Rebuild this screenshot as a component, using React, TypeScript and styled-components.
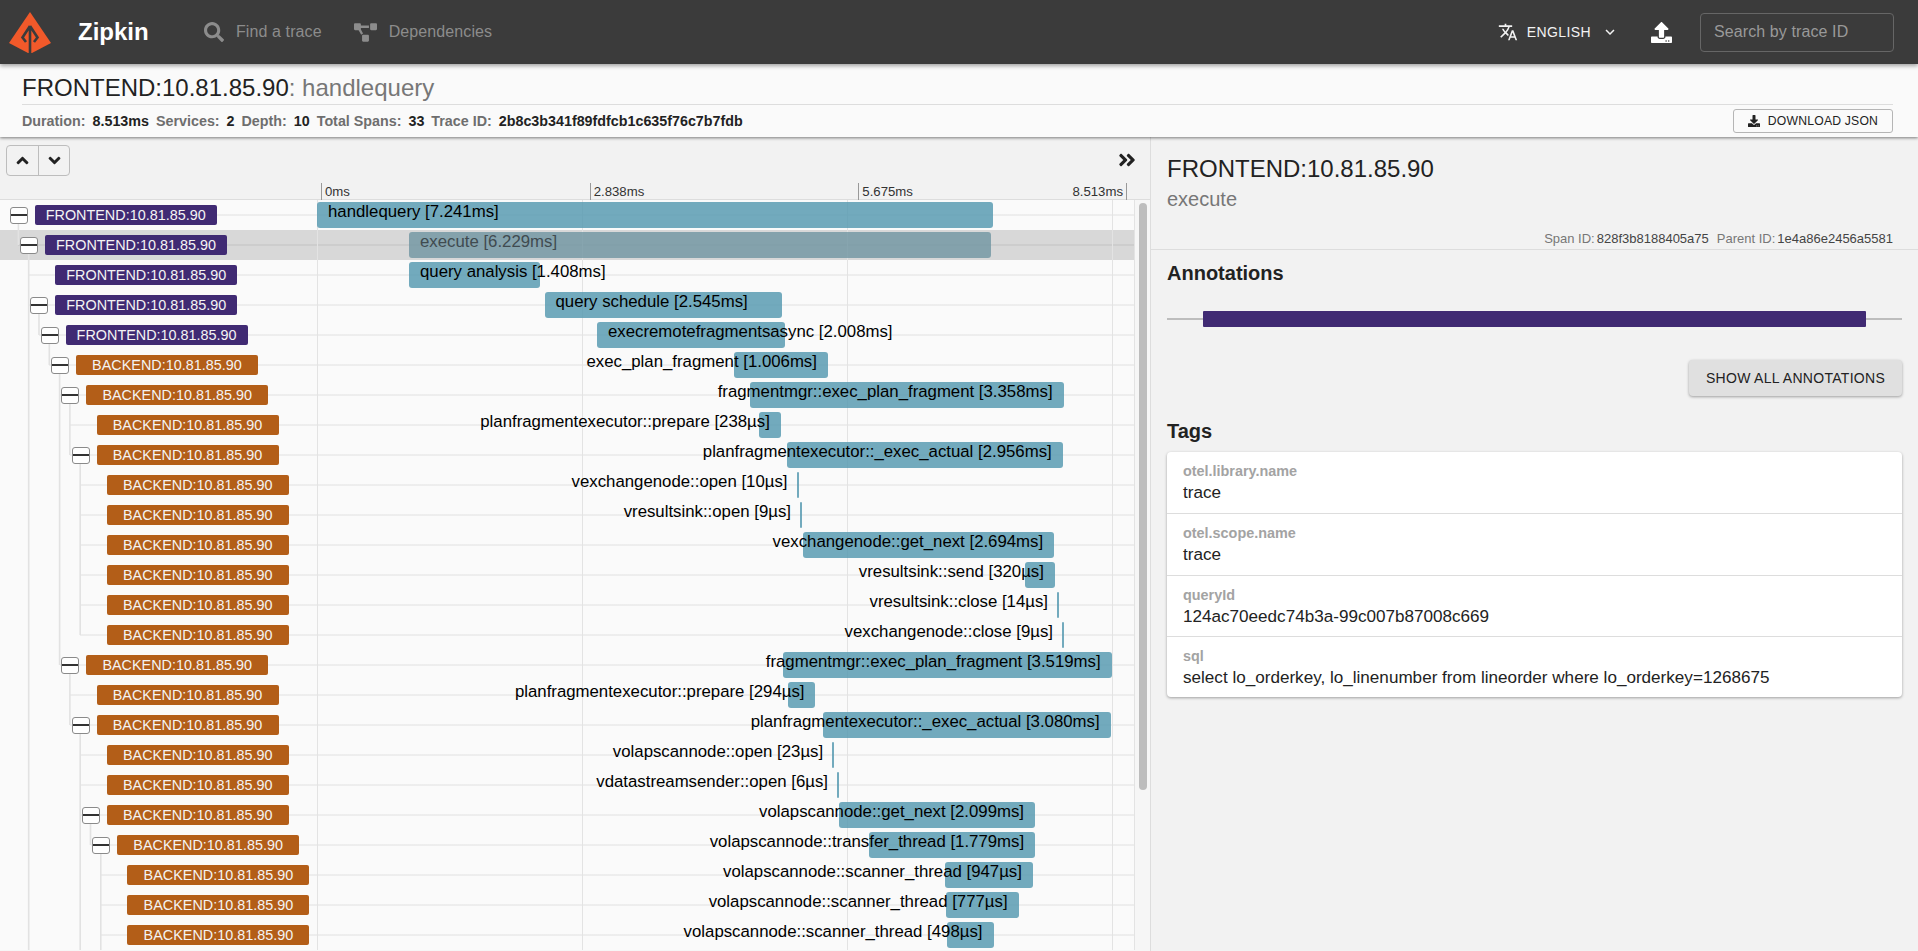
import styled, { createGlobalStyle } from 'styled-components';
import { FaAngleDoubleRight, FaAngleDown, FaAngleUp, FaDownload, FaProjectDiagram, FaSearch, FaUpload } from 'react-icons/fa';
import { MdExpandMore, MdTranslate } from 'react-icons/md';

const FRONTEND = 'FRONTEND:10.81.85.90';
const BACKEND = 'BACKEND:10.81.85.90';

const MS_WIDTH = 795 / 8.513;
const ROW_HEIGHT = 30;
const INDENT = 10.3;

interface Span {
  service: string;
  depth: number;
  toggle?: boolean;
  name: string;
  time: string;
  start: number;
  ms: number;
  right?: boolean;
}

const spans: Span[] = [
  { service: FRONTEND, depth: 0, toggle: true, name: 'handlequery', time: '7.241ms', start: 0, ms: 7.241 },
  { service: FRONTEND, depth: 1, toggle: true, name: 'execute', time: '6.229ms', start: 92, ms: 6.229 },
  { service: FRONTEND, depth: 2, name: 'query analysis', time: '1.408ms', start: 92, ms: 1.408 },
  { service: FRONTEND, depth: 2, toggle: true, name: 'query schedule', time: '2.545ms', start: 227.5, ms: 2.545 },
  { service: FRONTEND, depth: 3, toggle: true, name: 'execremotefragmentsasync', time: '2.008ms', start: 280, ms: 2.008 },
  { service: BACKEND, depth: 4, toggle: true, name: 'exec_plan_fragment', time: '1.006ms', start: 417, ms: 1.006, right: true },
  { service: BACKEND, depth: 5, toggle: true, name: 'fragmentmgr::exec_plan_fragment', time: '3.358ms', start: 433, ms: 3.358, right: true },
  { service: BACKEND, depth: 6, name: 'planfragmentexecutor::prepare', time: '238µs', start: 441.6, ms: 0.238, right: true },
  { service: BACKEND, depth: 6, toggle: true, name: 'planfragmentexecutor::_exec_actual', time: '2.956ms', start: 469.7, ms: 2.956, right: true },
  { service: BACKEND, depth: 7, name: 'vexchangenode::open', time: '10µs', start: 479.5, ms: 0.01, right: true },
  { service: BACKEND, depth: 7, name: 'vresultsink::open', time: '9µs', start: 483, ms: 0.009, right: true },
  { service: BACKEND, depth: 7, name: 'vexchangenode::get_next', time: '2.694ms', start: 485.6, ms: 2.694, right: true },
  { service: BACKEND, depth: 7, name: 'vresultsink::send', time: '320µs', start: 708, ms: 0.32, right: true },
  { service: BACKEND, depth: 7, name: 'vresultsink::close', time: '14µs', start: 740, ms: 0.014, right: true },
  { service: BACKEND, depth: 7, name: 'vexchangenode::close', time: '9µs', start: 745, ms: 0.009, right: true },
  { service: BACKEND, depth: 5, toggle: true, name: 'fragmentmgr::exec_plan_fragment', time: '3.519ms', start: 466, ms: 3.519, right: true },
  { service: BACKEND, depth: 6, name: 'planfragmentexecutor::prepare', time: '294µs', start: 471, ms: 0.294, right: true },
  { service: BACKEND, depth: 6, toggle: true, name: 'planfragmentexecutor::_exec_actual', time: '3.080ms', start: 506, ms: 3.08, right: true },
  { service: BACKEND, depth: 7, name: 'volapscannode::open', time: '23µs', start: 515, ms: 0.023, right: true },
  { service: BACKEND, depth: 7, name: 'vdatastreamsender::open', time: '6µs', start: 520, ms: 0.006, right: true },
  { service: BACKEND, depth: 7, toggle: true, name: 'volapscannode::get_next', time: '2.099ms', start: 522, ms: 2.099, right: true },
  { service: BACKEND, depth: 8, toggle: true, name: 'volapscannode::transfer_thread', time: '1.779ms', start: 552, ms: 1.779, right: true },
  { service: BACKEND, depth: 9, name: 'volapscannode::scanner_thread', time: '947µs', start: 627.5, ms: 0.947, right: true },
  { service: BACKEND, depth: 9, name: 'volapscannode::scanner_thread', time: '777µs', start: 629, ms: 0.777, right: true },
  { service: BACKEND, depth: 9, name: 'volapscannode::scanner_thread', time: '498µs', start: 630, ms: 0.498, right: true },
];

// [depth of the parent, first row, last row] of each tree connector
const connectors: [number, number, number][] = [
  [0, 0, 1],
  [1, 1, 25],
  [2, 3, 4],
  [3, 4, 5],
  [4, 5, 15],
  [5, 6, 8],
  [6, 8, 14],
  [5, 15, 17],
  [6, 17, 25],
  [7, 20, 21],
  [8, 21, 25],
];

const tags = [
  { key: 'otel.library.name', value: 'trace' },
  { key: 'otel.scope.name', value: 'trace' },
  { key: 'queryId', value: '124ac70eedc74b3a-99c007b87008c669' },
  { key: 'sql', value: 'select lo_orderkey, lo_linenumber from lineorder where lo_orderkey=1268675' },
];

const GlobalStyle = createGlobalStyle`
  html, body {
    margin: 0;
    padding: 0;
    height: 100%;
    overflow: hidden;
    background: #f2f2f2;
    font-family: "Liberation Sans", Arial, sans-serif;
  }
  * {
    box-sizing: border-box;
  }
`;

const Page = styled.div`
  display: flex;
  flex-direction: column;
  height: 951px;
  overflow: hidden;
`;

const TopBar = styled.header`
  display: flex;
  align-items: center;
  flex: 0 0 64px;
  padding: 0 24px 0 9px;
  background: #3b3b3b;
  position: relative;
  z-index: 2;
  box-shadow: 0 2px 4px rgba(0, 0, 0, 0.35);
`;

const Logo = styled.svg`
  width: 42px;
  height: 42px;
  margin-top: 1px;
`;

const Brand = styled.div`
  margin-left: 27px;
  width: 126px;
  color: #fff;
  font-size: 24px;
  font-weight: 700;
`;

const NavItem = styled.a`
  display: flex;
  align-items: center;
  gap: 12px;
  margin-right: 32px;
  color: #8c8c8c;
  font-size: 16px;
  letter-spacing: 0.1px;
  svg {
    font-size: 20px;
  }
`;

const Spacer = styled.div`
  flex: 1;
`;

const Language = styled.div`
  display: flex;
  align-items: center;
  color: #f2f2f2;
  font-size: 14px;
  letter-spacing: 0.4px;
  margin-right: 32px;
  span {
    margin: 0 10px 0 9px;
  }
`;

const UploadButton = styled.div`
  display: flex;
  color: #fff;
  font-size: 21px;
  margin-right: 28px;
`;

const SearchBox = styled.div`
  width: 194px;
  height: 39px;
  padding: 0 13px;
  display: flex;
  align-items: center;
  border: 1px solid #666;
  border-radius: 4px;
  color: #999;
  font-size: 16px;
  letter-spacing: 0.1px;
`;

const SubHeader = styled.section`
  flex: 0 0 73px;
  padding: 0 25px 0 22px;
  background: #fafafa;
  position: relative;
  z-index: 1;
  box-shadow: 0 1px 3px rgba(0, 0, 0, 0.5);
`;

const TraceTitle = styled.div`
  height: 41px;
  padding-top: 8px;
  border-bottom: 1px solid #ddd;
  font-size: 24px;
  line-height: 32px;
  color: #222;
  span {
    color: #777;
  }
`;

const MetaRow = styled.div`
  height: 32px;
  display: flex;
  align-items: center;
  justify-content: space-between;
`;

const Meta = styled.div`
  display: flex;
  gap: 7px;
  font-size: 14.3px;
  font-weight: 700;
`;

const MetaLabel = styled.span`
  color: #6e6e6e;
`;

const MetaValue = styled.span`
  color: #222;
`;

const DownloadButton = styled.button`
  width: 160px;
  height: 24px;
  display: flex;
  align-items: center;
  justify-content: center;
  gap: 8px;
  padding: 0;
  border: 1px solid #b5b5b5;
  border-radius: 3px;
  background: transparent;
  color: #222;
  font: 12.2px "Liberation Sans", Arial, sans-serif;
  letter-spacing: 0.2px;
  svg {
    font-size: 12px;
  }
`;

const Body = styled.div`
  flex: 1;
  min-height: 0;
  display: flex;
`;

const TracePane = styled.div`
  flex: 0 0 1151px;
  display: flex;
  flex-direction: column;
  min-height: 0;
  border-right: 1px solid #ddd;
`;

const PaneTools = styled.div`
  flex: 0 0 63px;
  position: relative;
  display: flex;
  align-items: flex-start;
  justify-content: space-between;
  padding: 8px 17px 0 6px;
  border-bottom: 1px solid #ddd;
`;

const ExpandGroup = styled.div`
  display: flex;
  height: 31px;
  border: 1px solid #bdbdbd;
  border-radius: 4px;
`;

const ExpandButton = styled.div`
  width: 31px;
  display: flex;
  align-items: center;
  justify-content: center;
  color: #222;
  font-size: 19px;
  & + & {
    border-left: 1px solid #bdbdbd;
  }
`;

const CollapseIcon = styled.div`
  display: flex;
  color: #222;
  font-size: 20px;
  margin-top: 5px;
  margin-right: -4px;
`;

const Ticks = styled.div`
  position: absolute;
  left: 321px;
  right: 23px;
  bottom: 0;
  height: 16px;
  display: grid;
  grid-template-columns: repeat(3, 1fr);
`;

const Tick = styled.div<{ $last?: boolean }>`
  display: flex;
  justify-content: space-between;
  border-left: 1px solid #999;
  padding-left: 3px;
  font-size: 13.2px;
  line-height: 18px;
  color: #333;
  ${(p) => p.$last && 'border-right: 1px solid #999; padding-right: 3px;'}
`;

const RowList = styled.div`
  flex: 1;
  min-height: 0;
  position: relative;
  overflow: hidden;
  background: #f6f6f6;
`;

const Row = styled.div<{ $lineFrom: number; $selected?: boolean }>`
  display: flex;
  width: 1135px;
  height: ${ROW_HEIGHT}px;
  background-color: ${(p) => (p.$selected ? '#d8d8d8' : '#fafafa')};
  background-image: linear-gradient(rgba(0, 0, 0, 0.05), rgba(0, 0, 0, 0.05));
  background-repeat: no-repeat;
  background-size: calc(100% - ${(p) => p.$lineFrom}px) 2px;
  background-position: right center;
`;

const TreeCell = styled.div<{ $depth: number }>`
  flex: 0 0 317px;
  display: flex;
  align-items: center;
  padding-left: ${(p) => 34.7 + p.$depth * INDENT}px;
  position: relative;
`;

const Toggle = styled.div`
  position: absolute;
  width: 18px;
  height: 17px;
  margin-left: -25px;
  border: 1px solid #8a8a8a;
  border-radius: 3px;
  background: linear-gradient(#333, #333) center / 100% 2px no-repeat, #fff;
  z-index: 1;
`;

const ServiceLabel = styled.div<{ $backend: boolean }>`
  width: 182px;
  height: 20px;
  border-radius: 2px;
  background: ${(p) => (p.$backend ? '#b35e18' : '#402a73')};
  color: #f4f4f4;
  font-size: 14.4px;
  line-height: 20px;
  text-align: center;
  white-space: nowrap;
  position: relative;
  z-index: 1;
`;

const BarCell = styled.div`
  flex: 1;
  position: relative;
  background-image: linear-gradient(#e3e3e3, #e3e3e3), linear-gradient(#e3e3e3, #e3e3e3),
    linear-gradient(#e3e3e3, #e3e3e3), linear-gradient(#e3e3e3, #e3e3e3), linear-gradient(#e3e3e3, #e3e3e3);
  background-repeat: no-repeat;
  background-size: 1px 100%;
  background-position: 0 0, 265px 0, 530px 0, 795px 0, 817px 0;
`;

const Bar = styled.div<{ $selected?: boolean }>`
  position: absolute;
  top: 2px;
  height: 26px;
  min-width: 2px;
  border-radius: 3px;
  background: ${(p) => (p.$selected ? 'rgba(111, 149, 161, 0.8)' : 'rgba(89, 155, 177, 0.85)')};
`;

const BarText = styled.div<{ $right?: boolean; $selected?: boolean }>`
  position: absolute;
  top: 0;
  ${(p) => (p.$right ? 'right: 11px;' : 'left: 11px;')}
  font-size: 16.8px;
  line-height: 20px;
  white-space: nowrap;
  color: ${(p) => (p.$selected ? '#404b50' : '#000')};
`;

const TreeLines = styled.svg`
  position: absolute;
  left: 0;
  top: 0;
  z-index: 0;
  pointer-events: none;
`;

const ScrollThumb = styled.div`
  position: absolute;
  left: 1139px;
  top: 3px;
  width: 8px;
  height: 587px;
  border-radius: 4px;
  background: #bdbdbd;
`;

const DetailPane = styled.aside`
  flex: 1;
  min-width: 0;
  display: flex;
  flex-direction: column;
`;

const DetailHead = styled.div`
  flex: 0 0 113px;
  padding: 17px 25px 0 16px;
  border-bottom: 1px solid #ddd;
`;

const DetailService = styled.div`
  font-size: 24px;
  line-height: 30px;
  color: #222;
`;

const DetailSpan = styled.div`
  margin-top: 2px;
  font-size: 20px;
  line-height: 26px;
  color: #777;
`;

const DetailIds = styled.div`
  display: flex;
  justify-content: flex-end;
  gap: 8px;
  margin-top: 19px;
  font-size: 13px;
  line-height: 16px;
  color: #444;
  b {
    font-weight: 400;
    color: #777;
    margin-right: 2px;
  }
`;

const DetailBody = styled.div`
  padding: 10px 16px 0;
`;

const SectionTitle = styled.h2`
  margin: 0;
  font-size: 20px;
  line-height: 26px;
  font-weight: 700;
  color: #222;
`;

const AnnotationTrack = styled.div`
  margin-top: 25px;
  height: 16px;
  padding: 0 36px;
  background: linear-gradient(#bdbdbd, #bdbdbd) center / 100% 2px no-repeat;
`;

const AnnotationBar = styled.div`
  height: 16px;
  border-radius: 1px;
  background: #402a73;
`;

const ButtonRow = styled.div`
  display: flex;
  justify-content: flex-end;
  margin-top: 33px;
`;

const ShowButton = styled.button`
  width: 213px;
  height: 36px;
  border: 0;
  border-radius: 4px;
  background: #e0e0e0;
  color: #222;
  font: 14px "Liberation Sans", Arial, sans-serif;
  letter-spacing: 0.3px;
  box-shadow: 0 1px 3px rgba(0, 0, 0, 0.35);
`;

const TagsTitle = styled(SectionTitle)`
  margin-top: 22px;
`;

const TagCard = styled.div`
  margin-top: 8px;
  border-radius: 4px;
  background: #fff;
  box-shadow: 0 1px 3px rgba(0, 0, 0, 0.35);
`;

const TagRow = styled.div`
  height: 61.3px;
  padding: 11px 16px 0;
  & + & {
    border-top: 1px solid #ddd;
  }
`;

const TagKey = styled.div`
  font-size: 14.4px;
  line-height: 16px;
  font-weight: 700;
  color: #a3a3a3;
`;

const TagValue = styled.div`
  margin-top: 2px;
  font-size: 17.1px;
  line-height: 24px;
  color: #222;
`;

const ZipkinMark = () => (
  <Logo viewBox="0 0 42 42">
    <path d="M21 0 L42 31 L23 41 L21 41 L19 41 L0 31 Z" fill="#f1592a" />
    <path
      d="M21 14 V41 M21 14 L13.5 25.5 L17 30 M21 14 L28.5 25.5 L25 30"
      fill="none"
      stroke="#3b3b3b"
      strokeWidth="2.6"
    />
  </Logo>
);

const App = () => {
  const listHeight = spans.length * ROW_HEIGHT;
  return (
    <Page>
      <GlobalStyle />
      <TopBar>
        <ZipkinMark />
        <Brand>Zipkin</Brand>
        <NavItem>
          <FaSearch />
          Find a trace
        </NavItem>
        <NavItem>
          <FaProjectDiagram style={{ fontSize: 23 }} />
          Dependencies
        </NavItem>
        <Spacer />
        <Language>
          <MdTranslate size={20} />
          <span>ENGLISH</span>
          <MdExpandMore size={18} />
        </Language>
        <UploadButton>
          <FaUpload />
        </UploadButton>
        <SearchBox>Search by trace ID</SearchBox>
      </TopBar>
      <SubHeader>
        <TraceTitle>
          FRONTEND:10.81.85.90<span>: handlequery</span>
        </TraceTitle>
        <MetaRow>
          <Meta>
            <MetaLabel>Duration:</MetaLabel>
            <MetaValue>8.513ms</MetaValue>
            <MetaLabel>Services:</MetaLabel>
            <MetaValue>2</MetaValue>
            <MetaLabel>Depth:</MetaLabel>
            <MetaValue>10</MetaValue>
            <MetaLabel>Total Spans:</MetaLabel>
            <MetaValue>33</MetaValue>
            <MetaLabel>Trace ID:</MetaLabel>
            <MetaValue>2b8c3b341f89fdfcb1c635f76c7b7fdb</MetaValue>
          </Meta>
          <DownloadButton>
            <FaDownload />
            DOWNLOAD JSON
          </DownloadButton>
        </MetaRow>
      </SubHeader>
      <Body>
        <TracePane>
          <PaneTools>
            <ExpandGroup>
              <ExpandButton>
                <FaAngleUp />
              </ExpandButton>
              <ExpandButton>
                <FaAngleDown />
              </ExpandButton>
            </ExpandGroup>
            <CollapseIcon>
              <FaAngleDoubleRight />
            </CollapseIcon>
            <Ticks>
              <Tick>0ms</Tick>
              <Tick>2.838ms</Tick>
              <Tick $last>
                <span>5.675ms</span>
                <span>8.513ms</span>
              </Tick>
            </Ticks>
          </PaneTools>
          <RowList>
            {spans.map((span, i) => {
              const selected = i === 1;
              const lineFrom = span.depth === 0 ? 35 : 18.4 + (span.depth - 1) * INDENT;
              return (
                <Row key={i} $lineFrom={lineFrom} $selected={selected}>
                  <TreeCell $depth={span.depth}>
                    {span.toggle && <Toggle />}
                    <ServiceLabel $backend={span.service === BACKEND}>{span.service}</ServiceLabel>
                  </TreeCell>
                  <BarCell>
                    <Bar $selected={selected} style={{ left: span.start, width: span.ms * MS_WIDTH }}>
                      <BarText $right={span.right} $selected={selected}>
                        {span.name} [{span.time}]
                      </BarText>
                    </Bar>
                  </BarCell>
                </Row>
              );
            })}
            <TreeLines width="316" height={listHeight}>
              {connectors.map(([depth, from, to], i) => {
                const x = 18.4 + depth * INDENT;
                const y2 = to >= spans.length ? listHeight : to * ROW_HEIGHT + 15;
                return <line key={i} x1={x} x2={x} y1={from * ROW_HEIGHT + 15} y2={y2} stroke="#e2e2e2" strokeWidth="1.6" />;
              })}
            </TreeLines>
            <ScrollThumb />
          </RowList>
        </TracePane>
        <DetailPane>
          <DetailHead>
            <DetailService>FRONTEND:10.81.85.90</DetailService>
            <DetailSpan>execute</DetailSpan>
            <DetailIds>
              <span>
                <b>Span ID:</b>828f3b8188405a75
              </span>
              <span>
                <b>Parent ID:</b>1e4a86e2456a5581
              </span>
            </DetailIds>
          </DetailHead>
          <DetailBody>
            <SectionTitle>Annotations</SectionTitle>
            <AnnotationTrack>
              <AnnotationBar />
            </AnnotationTrack>
            <ButtonRow>
              <ShowButton>SHOW ALL ANNOTATIONS</ShowButton>
            </ButtonRow>
            <TagsTitle>Tags</TagsTitle>
            <TagCard>
              {tags.map((tag) => (
                <TagRow key={tag.key}>
                  <TagKey>{tag.key}</TagKey>
                  <TagValue>{tag.value}</TagValue>
                </TagRow>
              ))}
            </TagCard>
          </DetailBody>
        </DetailPane>
      </Body>
    </Page>
  );
};

export default App;
